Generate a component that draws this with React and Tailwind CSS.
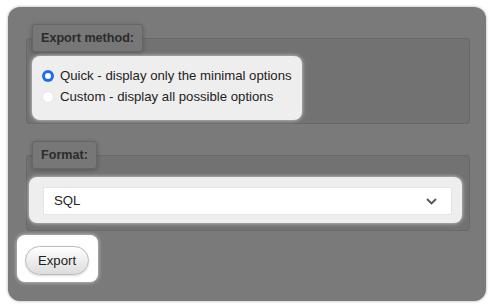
export default function App() {
  const font = { fontFamily: '"Liberation Sans", Arial, sans-serif' };
  return (
    <div className="w-[494px] h-[308px] bg-white pt-[7px] pl-[8px]" style={font}>
      <div className="w-[478px] h-[294px] rounded-[12px] bg-[#7a7a7a] pt-[17px] pl-[9px] shadow-[0_0_3px_rgba(0,0,0,0.35)]">
        <fieldset className="ml-[9px] w-[444px] border border-[#686868] rounded-[4px] bg-[#727272] px-[5px] pt-[4px] pb-[3px]">
          <legend className="h-[28px] px-[8px] border border-[#666] bg-[#777] rounded-[3px] text-[12.6px] font-bold text-[#2b2b2b] leading-[26px] shadow-[0_1px_4px_rgba(0,0,0,0.25)]">
            Export method:
          </legend>
          <div className="w-[270px] h-[64px] rounded-[8px] bg-[#eeeeee] pt-[10px] pl-[10px] flex flex-col gap-[1px] shadow-[0_0_4px_rgba(255,255,255,0.7)]">
            <div className="h-[20px] flex items-center gap-[6px] text-[13.2px] text-[#222]">
              <span className="w-[12px] h-[12px] rounded-full bg-[#1b6ff2] flex items-center justify-center">
                <span className="w-[6px] h-[6px] rounded-full bg-white" />
              </span>
              <span>Quick - display only the minimal options</span>
            </div>
            <div className="h-[20px] flex items-center gap-[6px] text-[13.2px] text-[#222]">
              <span className="w-[12px] h-[12px] rounded-full bg-white border border-[#e6e6e6]" />
              <span>Custom - display all possible options</span>
            </div>
          </div>
        </fieldset>

        <fieldset className="mt-[17px] ml-[9px] w-[444px] border border-[#686868] rounded-[4px] bg-[#727272] px-[2px] pt-[8px] pb-[7px]">
          <legend className="ml-[3px] h-[28px] px-[8px] border border-[#666] bg-[#777] rounded-[3px] text-[12.6px] font-bold text-[#2b2b2b] leading-[26px] shadow-[0_1px_4px_rgba(0,0,0,0.25)]">
            Format:
          </legend>
          <div className="w-[433px] h-[46px] rounded-[8px] bg-[#eeeeee] pl-[14px] pt-[10px] shadow-[0_0_4px_rgba(255,255,255,0.7)]">
            <div className="w-[409px] h-[28px] bg-white border border-[#e4e4e4] rounded-[2px] flex items-center justify-between pl-[10px] pr-[14px] text-[13.2px] text-[#222]">
              <span>SQL</span>
              <svg width="11" height="7" viewBox="0 0 11 7">
                <polyline points="1,1 5.5,5.5 10,1" fill="none" stroke="#555" strokeWidth="1.8" />
              </svg>
            </div>
          </div>
        </fieldset>

        <div className="mt-[4px] w-[81px] h-[47px] rounded-[8px] bg-white pl-[8px] pt-[11px] shadow-[0_0_4px_rgba(255,255,255,0.7)]">
          <button className="w-[64px] h-[29px] rounded-full border border-[#bbb] bg-gradient-to-b from-white to-[#dcdcdc] text-[13.2px] text-[#222] shadow-[0_1px_2px_rgba(0,0,0,0.15)]" style={font}>
            Export
          </button>
        </div>
      </div>
    </div>
  );
}
